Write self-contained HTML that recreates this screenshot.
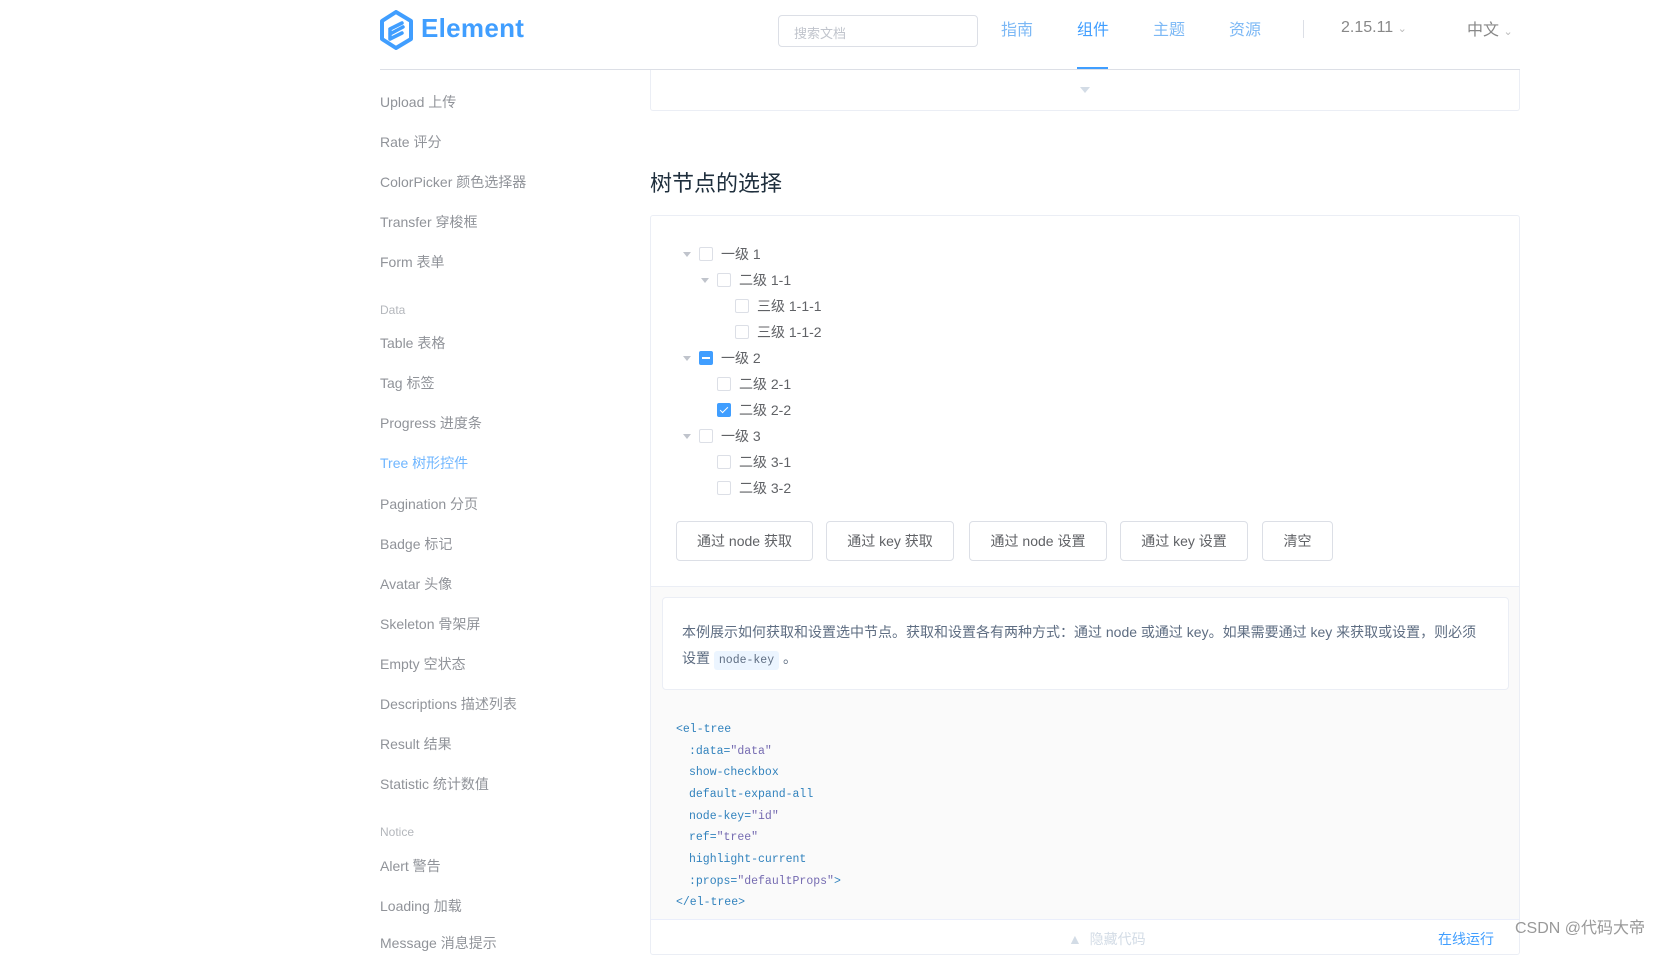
<!DOCTYPE html>
<html><head><meta charset="utf-8"><style>
*{margin:0;padding:0;box-sizing:border-box}
body{width:1665px;height:944px;overflow:hidden;background:#fff;font-family:"Liberation Sans","Noto Sans CJK SC",sans-serif;color:#606266;position:relative}
.a{position:absolute;white-space:nowrap}
.nav{font-size:16px;color:#7cb8f5;top:16px}
.sb{left:380px;font-size:14px;color:#909399;line-height:20px}
.grp{left:380px;font-size:12px;color:#b4b7bc}
.row{position:absolute;height:26px;display:flex;align-items:center;font-size:14px;color:#606266}
.car{width:0;height:0;border-left:4px solid transparent;border-right:4px solid transparent;border-top:5px solid #c0c4cc;margin-right:8px}
.nc{width:16px}
.cb{width:14px;height:14px;border:1px solid #dcdfe6;border-radius:2px;background:#fff;margin-right:8px;position:relative}
.cb.on{background:#409eff;border-color:#409eff}
.btn{position:absolute;top:521px;height:40px;border:1px solid #dcdfe6;border-radius:4px;font-size:14px;color:#606266;display:flex;align-items:center;justify-content:center;background:#fff}
.code{position:absolute;left:676px;font-family:"Liberation Mono",monospace;font-size:11.5px;color:#3182bd;line-height:16px}
.s{color:#756bb1}
</style></head><body>
<svg class="a" style="left:379px;top:10px" width="36" height="40" viewBox="0 0 36 40"><path d="M17 2 L32 11 L32 29 L17 38 L3 29 L3 11 Z" fill="none" stroke="#409eff" stroke-width="4" stroke-linejoin="round"/><path d="M11 19 L23 13 M11 24 L24 17 M11 29 L23 23 M11 19 L11 29" stroke="#409eff" stroke-width="3.5" fill="none" stroke-linecap="round"/></svg>
<div class="a" style="left:421px;top:13px;font-size:26px;font-weight:bold;color:#409eff;letter-spacing:0.3px">Element</div>
<div class="a" style="left:778px;top:15px;width:200px;height:32px;border:1px solid #dcdfe6;border-radius:4px;font-size:13px;color:#c0c4cc;padding:7px 15px">搜索文档</div>
<div class="a nav" style="left:1001px">指南</div>
<div class="a nav" style="left:1077px;color:#409eff">组件</div>
<div class="a" style="left:1077px;top:67px;width:31px;height:2px;background:#409eff"></div>
<div class="a nav" style="left:1153px">主题</div>
<div class="a nav" style="left:1229px">资源</div>
<div class="a" style="left:1303px;top:20px;width:1px;height:18px;background:#dcdfe6"></div>
<div class="a" style="left:1341px;top:19px;font-size:16px;color:#888">2.15.11 <span style="font-size:11px;color:#bbb">&#8964;</span></div>
<div class="a" style="left:1467px;top:16px;font-size:16px;color:#888">中文 <span style="font-size:11px;color:#bbb">&#8964;</span></div>
<div class="a" style="left:380px;top:69px;width:1140px;height:1px;background:#dcdfe6"></div>
<div class="a" style="left:650px;top:70px;width:870px;height:41px;border:1px solid #ebeef5;border-top:none;border-radius:0 0 3px 3px"></div>
<div class="a" style="left:1080px;top:87px;border-left:5px solid transparent;border-right:5px solid transparent;border-top:6px solid #d3dce6"></div>

<div class="a sb" style="top:92px">Upload 上传</div>
<div class="a sb" style="top:132px">Rate 评分</div>
<div class="a sb" style="top:172px">ColorPicker 颜色选择器</div>
<div class="a sb" style="top:212px">Transfer 穿梭框</div>
<div class="a sb" style="top:252px">Form 表单</div>
<div class="a grp" style="top:303px">Data</div>
<div class="a sb" style="top:333px">Table 表格</div>
<div class="a sb" style="top:373px">Tag 标签</div>
<div class="a sb" style="top:413px">Progress 进度条</div>
<div class="a sb" style="top:453px;color:#409eff;opacity:.75">Tree 树形控件</div>
<div class="a sb" style="top:494px">Pagination 分页</div>
<div class="a sb" style="top:534px">Badge 标记</div>
<div class="a sb" style="top:574px">Avatar 头像</div>
<div class="a sb" style="top:614px">Skeleton 骨架屏</div>
<div class="a sb" style="top:654px">Empty 空状态</div>
<div class="a sb" style="top:694px">Descriptions 描述列表</div>
<div class="a sb" style="top:734px">Result 结果</div>
<div class="a sb" style="top:774px">Statistic 统计数值</div>
<div class="a grp" style="top:825px">Notice</div>
<div class="a sb" style="top:856px">Alert 警告</div>
<div class="a sb" style="top:896px">Loading 加载</div>
<div class="a sb" style="top:933px">Message 消息提示</div>

<div class="a" style="left:650px;top:166px;font-size:22px;color:#1f2f3d">树节点的选择</div>
<div class="a" style="left:650px;top:215px;width:870px;height:740px;border:1px solid #ebeef5;border-radius:3px"></div>

<div class="row" style="left:683px;top:241px"><span class="car"></span><span class="cb"></span>一级 1</div>
<div class="row" style="left:701px;top:267px"><span class="car"></span><span class="cb"></span>二级 1-1</div>
<div class="row" style="left:719px;top:293px"><span class="nc"></span><span class="cb"></span>三级 1-1-1</div>
<div class="row" style="left:719px;top:319px"><span class="nc"></span><span class="cb"></span>三级 1-1-2</div>
<div class="row" style="left:683px;top:345px"><span class="car"></span><span class="cb on"><span style="position:absolute;left:2px;top:5px;width:8px;height:2px;background:#fff"></span></span>一级 2</div>
<div class="row" style="left:701px;top:371px"><span class="nc"></span><span class="cb"></span>二级 2-1</div>
<div class="row" style="left:701px;top:397px"><span class="nc"></span><span class="cb on"><span style="position:absolute;left:4px;top:1px;width:4px;height:8px;border:solid #fff;border-width:0 1.5px 1.5px 0;transform:rotate(45deg)"></span></span>二级 2-2</div>
<div class="row" style="left:683px;top:423px"><span class="car"></span><span class="cb"></span>一级 3</div>
<div class="row" style="left:701px;top:449px"><span class="nc"></span><span class="cb"></span>二级 3-1</div>
<div class="row" style="left:701px;top:475px"><span class="nc"></span><span class="cb"></span>二级 3-2</div>

<div class="btn" style="left:676px;width:137px">通过 node 获取</div>
<div class="btn" style="left:826px;width:128px">通过 key 获取</div>
<div class="btn" style="left:969px;width:138px">通过 node 设置</div>
<div class="btn" style="left:1120px;width:128px">通过 key 设置</div>
<div class="btn" style="left:1262px;width:71px">清空</div>

<div class="a" style="left:651px;top:586px;width:868px;height:333px;background:#fafafa;border-top:1px solid #ebeef5"></div>
<div class="a" style="left:662px;top:597px;width:847px;height:93px;background:#fff;border:1px solid #ebeef5;border-radius:4px"></div>
<div class="a" style="left:682px;top:622px;font-size:14px;color:#5e6d82">本例展示如何获取和设置选中节点。获取和设置各有两种方式：通过 node 或通过 key。如果需要通过 key 来获取或设置，则必须</div>
<div class="a" style="left:682px;top:648px;font-size:14px;color:#5e6d82">设置 <span style="background:#ecf5ff;font-family:'Liberation Mono',monospace;font-size:11.5px;padding:3px 5px;border-radius:3px;color:#5e6d82">node-key</span> 。</div>

<div class="code" style="top:722px">&lt;el-tree</div>
<div class="code" style="top:744px;left:689px">:data=<span class="s">"data"</span></div>
<div class="code" style="top:765px;left:689px">show-checkbox</div>
<div class="code" style="top:787px;left:689px">default-expand-all</div>
<div class="code" style="top:809px;left:689px">node-key=<span class="s">"id"</span></div>
<div class="code" style="top:830px;left:689px">ref=<span class="s">"tree"</span></div>
<div class="code" style="top:852px;left:689px">highlight-current</div>
<div class="code" style="top:874px;left:689px">:props=<span class="s">"defaultProps"</span>&gt;</div>
<div class="code" style="top:895px">&lt;/el-tree&gt;</div>

<div class="a" style="left:651px;top:919px;width:868px;height:1px;background:#eaeefb"></div>
<div class="a" style="left:1068px;top:929px;font-size:14px;color:#d3dce6">▲ &nbsp;隐藏代码</div>
<div class="a" style="left:1438px;top:929px;font-size:14px;color:#409eff">在线运行</div>
<div class="a" style="left:1515px;top:914px;font-size:16px;color:#999">CSDN @代码大帝</div>
</body></html>
